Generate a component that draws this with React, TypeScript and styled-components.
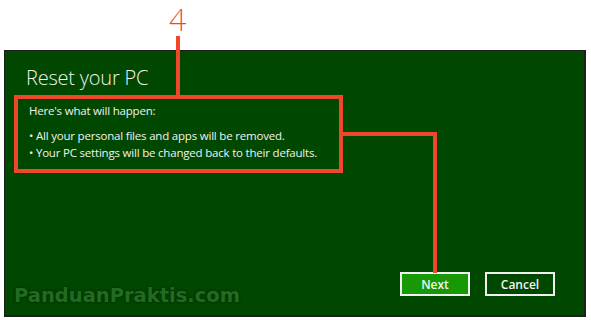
import styled, {createGlobalStyle} from "styled-components";

const GlobalStyle = createGlobalStyle`
  html, body {
    margin: 0;
    padding: 0;
    background: #ffffff;
  }
  * {
    box-sizing: border-box;
  }
`;

const Page = styled.div`
  position: relative;
  width: 591px;
  height: 320px;
  padding: 50px 0 0 4px;
  font-family: "Open Sans", "Liberation Sans", sans-serif;
  overflow: hidden;
`;

const Panel = styled.div`
  position: relative;
  width: 582px;
  height: 267px;
  background: #004700;
  border: 1px solid #1e1e1e;
  border-width: 1px 2px 2px 1px;
  display: flex;
  flex-direction: column;
  color: #f2f2f2;
`;

const Title = styled.h1`
  margin: 13px 0 0 21px;
  font-size: 20px;
  font-weight: 300;
  line-height: 28px;
  letter-spacing: -0.2px;
`;

const Highlight = styled.div`
  margin: 3px 0 0 9px;
  width: 329px;
  height: 78px;
  border: 4px solid #f0462a;
  padding: 3px 0 0 11px;
  font-size: 11.5px;
  line-height: 17px;
  letter-spacing: -0.2px;
`;

const Lead = styled.p`
  margin: 0 0 8px;
`;

const Bullets = styled.ul`
  margin: 0;
  padding: 0;
  list-style: none;
  li::before {
    content: "• ";
  }
`;

const Spacer = styled.div`
  flex: 1;
`;

const ButtonRow = styled.div`
  display: flex;
  justify-content: flex-end;
  gap: 15px;
  padding: 0 29px 19px 0;
`;

const Button = styled.button<{$primary?: boolean}>`
  width: 70px;
  height: 24px;
  border: 2px solid #f0f0f0;
  background: ${props => props.$primary ? "#179905" : "#004700"};
  color: #f4f4f4;
  font-family: "Open Sans", "Liberation Sans", sans-serif;
  font-size: 12px;
  font-weight: 600;
  padding: 0;
`;

const Watermark = styled.div`
  position: absolute;
  left: 9px;
  bottom: 7px;
  font-family: "DejaVu Sans", sans-serif;
  font-size: 19.5px;
  font-weight: bold;
  line-height: 24px;
  color: #226b21;
  text-shadow: 0 0 3px #013201, 0 0 2px #013201;
`;

const Callout = styled.div`
  position: absolute;
  left: 169px;
  top: 0;
  font-family: Lato, "Liberation Sans", sans-serif;
  font-size: 31px;
  font-weight: 300;
  color: #f0462a;
`;

const Line = styled.div<{$x: number; $y: number; $w: number; $h: number}>`
  position: absolute;
  left: ${props => props.$x}px;
  top: ${props => props.$y}px;
  width: ${props => props.$w}px;
  height: ${props => props.$h}px;
  background: #f0462a;
`;

function App() {
    return (
        <Page>
            <GlobalStyle/>
            <Panel>
                <Title>Reset your PC</Title>
                <Highlight>
                    <Lead>Here's what will happen:</Lead>
                    <Bullets>
                        <li>All your personal files and apps will be removed.</li>
                        <li>Your PC settings will be changed back to their defaults.</li>
                    </Bullets>
                </Highlight>
                <Spacer/>
                <ButtonRow>
                    <Button type='button' $primary>Next</Button>
                    <Button type='button'>Cancel</Button>
                </ButtonRow>
                <Watermark>PanduanPraktis.com</Watermark>
            </Panel>
            <Callout>4</Callout>
            <Line $x={176} $y={36} $w={4} $h={60}/>
            <Line $x={343} $y={132} $w={94} $h={4}/>
            <Line $x={433} $y={132} $w={4} $h={141}/>
        </Page>
    )
}

export default App;
